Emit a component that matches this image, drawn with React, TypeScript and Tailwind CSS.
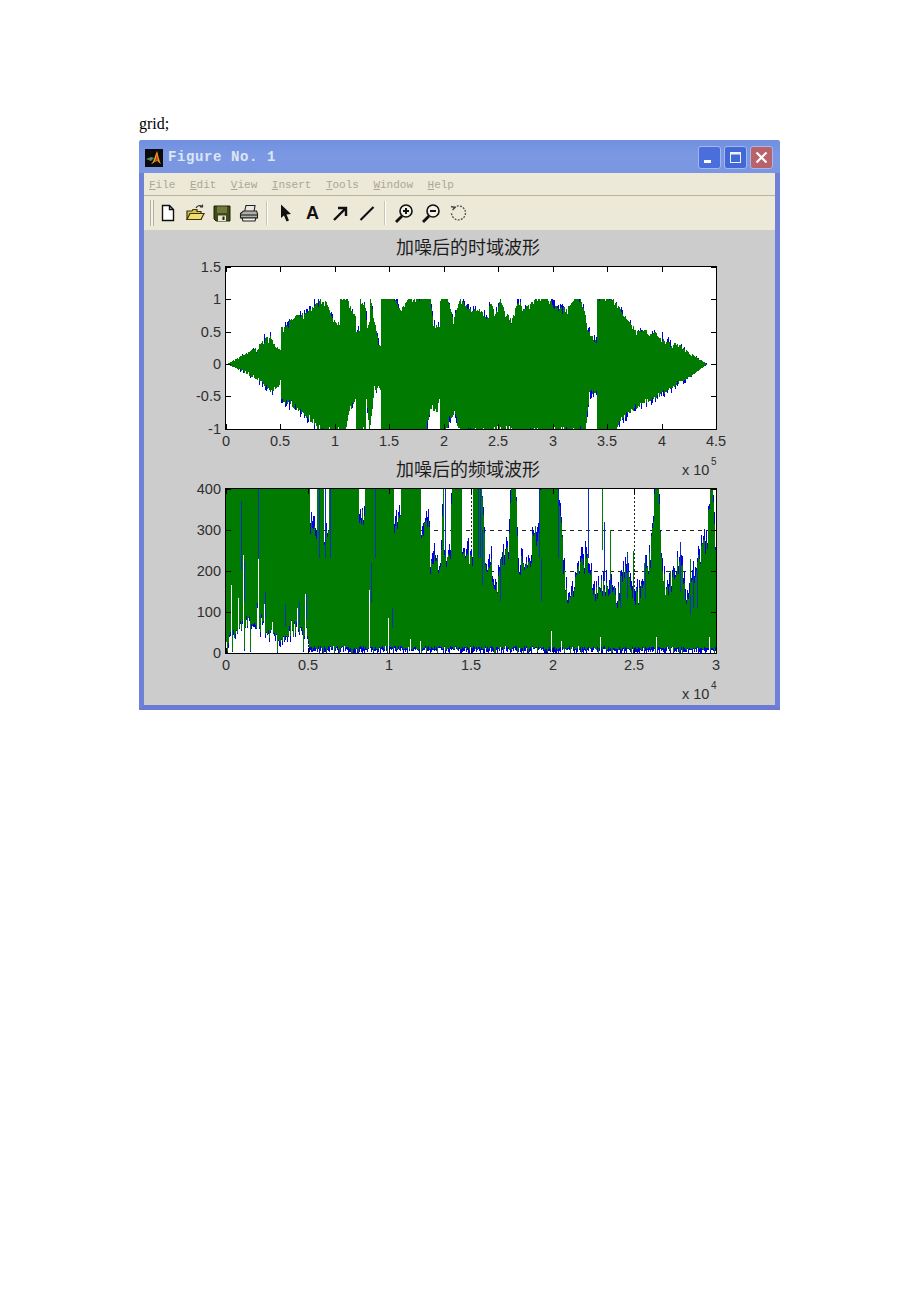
const menuItems = ["File", "Edit", "View", "Insert", "Tools", "Window", "Help"];

type Key = [number, number];

// seeded so the picture is the same on every load
function makeRand(seed: number) {
  let s = seed;
  return () => {
    s = (s * 1664525 + 1013904223) % 4294967296;
    return s / 4294967296;
  };
}

function interp(keys: Key[], x: number) {
  if (x <= keys[0][0]) return keys[0][1];
  for (let i = 1; i < keys.length; i++) {
    if (x <= keys[i][0]) {
      const [x0, y0] = keys[i - 1];
      const [x1, y1] = keys[i];
      return y0 + ((y1 - y0) * (x - x0)) / (x1 - x0 || 1);
    }
  }
  return keys[keys.length - 1][1];
}

const timeUpper: Key[] = [
  [226, 0], [240, 0.12], [257, 0.27], [265, 0.42], [270, 0.44], [275, 0.3], [280, 0.27], [281, 0.58], [288, 0.65],
  [295, 0.75], [307, 0.82], [315, 0.95], [322, 1.02], [327, 0.95], [330, 0.8], [336, 0.65], [339, 0.7], [340, 1.05],
  [347, 1.05], [350, 0.9], [355, 0.75], [356, 0.5], [359, 0.55], [360, 1.05], [365, 0.9], [367, 0.6], [369, 0.65],
  [370, 1.05], [373, 0.8], [378, 0.35], [380, 0.3], [381, 1.1], [393, 1.1], [400, 0.85], [410, 1.05], [430, 1.05],
  [433, 0.62], [439, 0.62], [440, 1.05], [447, 1.05], [453, 0.7], [460, 1.02], [470, 0.85], [480, 0.85], [487, 0.72],
  [490, 0.98], [495, 0.78], [500, 1.02], [505, 0.8], [512, 0.72], [518, 1.03], [523, 0.85], [527, 0.92], [537, 1.03],
  [547, 1.03], [557, 0.88], [567, 0.88], [575, 1.03], [580, 1.03], [585, 0.78], [587, 0.55], [596, 0.36], [597, 1.05],
  [611, 1.05], [618, 0.9], [627, 0.7], [637, 0.52], [647, 0.52], [657, 0.5], [667, 0.35], [677, 0.33], [687, 0.2],
  [697, 0.1], [707, 0],
];

const timeLower: Key[] = [
  [226, 0], [240, -0.1], [262, -0.3], [270, -0.45], [278, -0.35], [280, -0.3], [281, -0.58], [300, -0.75], [320, -1.05],
  [345, -1.05], [348, -0.8], [355, -0.55], [356, -1.05], [365, -1.05], [366, -0.55], [369, -1.05], [372, -0.75],
  [374, -0.42], [380, -0.42], [381, -1.1], [425, -1.1], [430, -0.72], [437, -0.75], [439, -0.55], [440, -1.05],
  [447, -1.05], [449, -0.85], [455, -0.8], [458, -1.05], [585, -1.05], [587, -0.8], [589, -0.48], [596, -0.45],
  [597, -1.1], [612, -1.1], [622, -0.85], [640, -0.65], [660, -0.5], [675, -0.35], [690, -0.2], [707, 0],
];

const freqUpper: Key[] = [
  [226, 460], [309, 460], [310, 300], [316, 300], [317, 460], [323, 460], [324, 290], [328, 290], [329, 460], [358, 460],
  [359, 330], [364, 330], [365, 460], [393, 460], [394, 320], [400, 320], [401, 460], [420, 460], [421, 300], [429, 300],
  [430, 220], [440, 215], [441, 240], [443, 460], [444, 230], [450, 230], [452, 460], [461, 460], [462, 240], [472, 240],
  [473, 460], [480, 460], [485, 220], [490, 220], [495, 150], [500, 200], [508, 250], [511, 420], [515, 420], [518, 200],
  [523, 220], [530, 200], [533, 300], [538, 280], [541, 460], [556, 460], [562, 310], [563, 200], [567, 130], [577, 180],
  [580, 220], [587, 220], [595, 130], [602, 160], [608, 150], [617, 130], [627, 220], [633, 130], [640, 140], [650, 230],
  [655, 420], [658, 420], [662, 200], [667, 140], [680, 230], [687, 120], [697, 210], [707, 280], [710, 420], [712, 420],
  [716, 210],
];

const freqLower: Key[] = [
  [226, 28], [232, 55], [240, 70], [250, 80], [257, 95], [265, 55], [280, 40], [290, 65], [305, 55], [308, 40], [309, 14],
  [716, 12],
];

const whiteSpikes: Key[] = [[231, 165], [238, 135], [243, 240], [258, 230], [264, 120], [272, 75], [297, 110], [305, 145], [369, 155], [388, 85], [600, 40], [656, 40], [410, 35], [420, 30], [551, 55], [561, 30], [709, 40]];
const blueSpikes: Key[] = [[241, 370], [244, 225], [258, 420], [265, 150], [285, 120], [299, 125], [306, 145], [371, 220], [375, 420], [392, 110], [478, 420], [539, 420], [558, 420], [588, 420], [541, 230], [604, 320], [610, 260], [620, 200], [627, 240], [645, 240], [680, 270], [693, 200], [697, 200], [319, 420], [325, 420], [330, 420], [480, 420], [482, 300], [445, 420], [500, 230], [690, 170]];
const greenSpikes: Key[] = [[602, 420], [610, 300], [625, 210], [633, 250], [644, 220], [660, 200], [670, 200], [690, 230], [700, 210], [535, 310]];

function timePaths() {
  const rand = makeRand(17);
  const y = (v: number) => 364 - 64.8 * Math.max(-1, Math.min(1, v));
  let blue = "";
  let green = "";
  for (let x = 226; x <= 707; x++) {
    const fade = Math.min(1, (707 - x) / 40, (x - 226) / 40);
    const up = interp(timeUpper, x) - rand() * rand() * 0.12 * fade;
    const low = interp(timeLower, x) + rand() * rand() * 0.12 * fade;
    // the blue trace only shows past the green one here and there
    const upB = interp(timeUpper, x) + (rand() < 0.25 ? rand() * 0.07 * fade : -0.1 * fade);
    const lowB = interp(timeLower, x) - (rand() < 0.25 ? rand() * 0.07 * fade : -0.1 * fade);
    blue += `M${x + 0.5} ${y(upB).toFixed(1)}V${y(lowB).toFixed(1)}`;
    green += `M${x + 0.5} ${y(up).toFixed(1)}V${y(low).toFixed(1)}`;
  }
  return { blue, green };
}

function freqPaths() {
  const rand = makeRand(91);
  const y = (v: number) => 653 - 0.41 * Math.max(0, Math.min(400, v));
  let blue = "";
  let green = "";
  let white = "";
  for (let x = 226; x <= 716; x++) {
    const up = interp(freqUpper, x) + (rand() - 0.5) * 55;
    const low = Math.max(0, interp(freqLower, x) * (0.6 + rand() * 0.7)) * (rand() < 0.08 ? 0.1 : 1);
    const upB = up + rand() * 35;
    const lowB = Math.max(0, low - rand() * 14);
    blue += `M${x + 0.5} ${y(upB).toFixed(1)}V${y(lowB).toFixed(1)}`;
    green += `M${x + 0.5} ${y(up).toFixed(1)}V${y(low).toFixed(1)}`;
  }
  whiteSpikes.forEach(([x, v]) => {
    white += `M${x + 0.5} 653V${y(v).toFixed(1)}`;
  });
  let blueTop = "";
  blueSpikes.forEach(([x, v]) => {
    blueTop += `M${x + 0.5} ${y(v).toFixed(1)}V${y(v * 0.55).toFixed(1)}`;
  });
  let greenTop = "";
  greenSpikes.forEach(([x, v]) => {
    greenTop += `M${x + 0.5} ${y(v).toFixed(1)}V${y(v * 0.6).toFixed(1)}`;
  });
  return { blue, green, white, blueTop, greenTop };
}

const labelFont = "[font-family:'Liberation_Sans',Arial,sans-serif] text-[14.5px] fill-[#2f2f2f]";
const supFont = "[font-family:'Liberation_Sans',Arial,sans-serif] text-[10px] fill-[#2f2f2f]";
const titleFont = "[font-family:'Noto_Sans_CJK_SC',sans-serif] text-[18px] fill-[#1c1c1c]";

function Ticks({ xs, ys, left, right, top, bottom }: { xs: number[]; ys: number[]; left: number; right: number; top: number; bottom: number }) {
  let d = "";
  xs.forEach((x) => {
    d += `M${x + 0.5} ${top}v5M${x + 0.5} ${bottom}v-5`;
  });
  ys.forEach((y) => {
    d += `M${left} ${y + 0.5}h5M${right} ${y + 0.5}h-5`;
  });
  return <path d={d} stroke="#000" fill="none" />;
}

function Figure() {
  const t = timePaths();
  const f = freqPaths();
  const topX = [226, 280, 335, 389, 444, 498, 553, 607, 662, 716];
  const topXLabels = ["0", "0.5", "1", "1.5", "2", "2.5", "3", "3.5", "4", "4.5"];
  const topY = [267, 299, 332, 364, 396, 429];
  const topYLabels = ["1.5", "1", "0.5", "0", "-0.5", "-1"];
  const botX = [226, 308, 389, 471, 553, 634, 716];
  const botXLabels = ["0", "0.5", "1", "1.5", "2", "2.5", "3"];
  const botY = [489, 530, 571, 612, 653];
  const botYLabels = ["400", "300", "200", "100", "0"];

  return (
    <svg viewBox="144 230 632 475" width="632" height="475" className="block">
      <text x="468" y="254" textAnchor="middle" className={titleFont}>加噪后的时域波形</text>
      <rect x="226" y="267" width="490" height="162" fill="#fff" />
      <g shapeRendering="crispEdges">
        <path d={t.blue} stroke="#0000e0" fill="none" />
        <path d={t.green} stroke="#007a00" fill="none" />
        <rect x="225.5" y="266.5" width="491" height="163" fill="none" stroke="#000" />
        <Ticks xs={topX} ys={topY} left={226} right={716} top={267} bottom={429} />
      </g>
      {topX.map((x, i) => (
        <text key={x} x={x} y="446" textAnchor="middle" className={labelFont}>{topXLabels[i]}</text>
      ))}
      {topY.map((y, i) => (
        <text key={y} x="221" y={y + 5} textAnchor="end" className={labelFont}>{topYLabels[i]}</text>
      ))}
      <text x="682" y="475" className={labelFont}>x 10</text>
      <text x="711" y="465" className={supFont}>5</text>

      <text x="468" y="476" textAnchor="middle" className={titleFont}>加噪后的频域波形</text>
      <rect x="226" y="489" width="490" height="164" fill="#fff" />
      <g shapeRendering="crispEdges">
        <path d="M226 530.5H716M226 571.5H716M226 612.5H716" stroke="#222" strokeDasharray="4 4" fill="none" />
        <path d="M308.5 489V653M389.5 489V653M471.5 489V653M553.5 489V653M634.5 489V653" stroke="#222" strokeDasharray="2 2" fill="none" />
        <path d={f.blue} stroke="#0000e0" fill="none" />
        <path d={f.green} stroke="#007a00" fill="none" />
        <path d={f.blueTop} stroke="#0a2fc8" fill="none" />
        <path d={f.greenTop} stroke="#007a00" fill="none" />
        <path d={f.white} stroke="#fff" fill="none" />
        <rect x="225.5" y="488.5" width="491" height="165" fill="none" stroke="#000" />
        <Ticks xs={botX} ys={botY} left={226} right={716} top={489} bottom={653} />
      </g>
      {botX.map((x, i) => (
        <text key={x} x={x} y="670" textAnchor="middle" className={labelFont}>{botXLabels[i]}</text>
      ))}
      {botY.map((y, i) => (
        <text key={y} x="221" y={y + 5} textAnchor="end" className={labelFont}>{botYLabels[i]}</text>
      ))}
      <text x="682" y="699" className={labelFont}>x 10</text>
      <text x="711" y="689" className={supFont}>4</text>
    </svg>
  );
}

function MatlabIcon() {
  return (
    <svg width="18" height="18" viewBox="0 0 18 18" className="shrink-0">
      <rect width="18" height="18" fill="#0b0b0b" />
      <path d="M1 10l5-2 3 1-3 3z" fill="#4f8a6a" />
      <path d="M6 15c3-2 4-9 6-13 1 3 2 9 4 13-2-1-3-3-4-3-2 0-4 3-6 3z" fill="#e8a020" />
      <path d="M9 13c2-2 2-5 3-8 0 3 1 5 1 7-1-1-2 0-4 1z" fill="#c83a10" />
    </svg>
  );
}

function CaptionButton({ kind }: { kind: "min" | "max" | "close" }) {
  const bg = kind === "close" ? "bg-[#b9626a]" : kind === "min" ? "bg-[#4a6fdc]" : "bg-[#4168d6]";
  return (
    <div className={`w-[23px] h-[23px] rounded-[3px] border border-[#a4b8ee] flex items-center justify-center ${bg}`}>
      <svg width="17" height="17" viewBox="0 0 17 17">
        {kind === "min" && <rect x="3" y="11" width="7" height="3" fill="#fff" />}
        {kind === "max" && (
          <g fill="none" stroke="#eef2ff">
            <rect x="3.5" y="3.5" width="10" height="10" />
            <path d="M3 4.5h11" strokeWidth="2" />
          </g>
        )}
        {kind === "close" && <path d="M3.5 3.5l10 10M13.5 3.5l-10 10" stroke="#fff" strokeWidth="2.2" />}
      </svg>
    </div>
  );
}

function ToolIcon({ name }: { name: string }) {
  return (
    <div className="w-[27px] h-[22px] flex items-center justify-center">
      <svg width="20" height="20" viewBox="0 0 20 20">
        {name === "new" && <path d="M4.5 2.5h7l4 4v11h-11zM11.5 2.5v4h4" fill="#fff" stroke="#111" strokeWidth="1.4" />}
        {name === "open" && (
          <g>
            <path d="M2 8h5l1-1.5h4v2h4v8H2z" fill="#d8c24a" stroke="#3c3410" strokeWidth="1.2" />
            <path d="M2 16.5l3-6h14l-3 6z" fill="#f0e070" stroke="#3c3410" strokeWidth="1.2" />
            <path d="M11 5c1-2.5 4-3 6-1.5M17.5 1.5V4H15" fill="none" stroke="#333" strokeWidth="1.2" />
          </g>
        )}
        {name === "save" && (
          <g>
            <path d="M2 3h16v15H4l-2-2z" fill="#3f4a18" stroke="#1e2208" />
            <rect x="5" y="3.5" width="10" height="6.5" fill="#6f7a3a" />
            <rect x="6" y="12.5" width="8" height="5.5" fill="#e8e6d4" />
            <rect x="10.5" y="13.5" width="2" height="3.5" fill="#222" />
          </g>
        )}
        {name === "print" && (
          <g stroke="#222" strokeWidth="1.1">
            <path d="M5.5 9L7 2.5h9l-1 6.5z" fill="#e8e8e4" />
            <path d="M1.5 10.5l3-2.5h13l1 2.5V15h-17z" fill="#b0b0a8" />
            <path d="M3 15h14l-1 3H4z" fill="#f2f2ec" />
            <path d="M2 12h16" fill="none" />
          </g>
        )}
        {name === "pointer" && <path d="M5 1.5l10 9.5-4.5.5 2.5 6-2.5 1-2.5-6L5 15z" fill="#111" />}
        {name === "arrow" && <path d="M4 17L15 6M8 5h8v8" fill="none" stroke="#111" strokeWidth="2.4" />}
        {name === "line" && <path d="M3.5 17L16.5 4" fill="none" stroke="#111" strokeWidth="2.2" />}
        {name === "zoomin" && (
          <g fill="none" stroke="#111">
            <circle cx="12" cy="8" r="6" strokeWidth="1.6" fill="#f4f2e6" />
            <path d="M8 13l-6 6" strokeWidth="2.8" />
            <path d="M9 8h6M12 5v6" strokeWidth="2" />
          </g>
        )}
        {name === "zoomout" && (
          <g fill="none" stroke="#111">
            <circle cx="12" cy="8" r="6" strokeWidth="1.6" fill="#f4f2e6" />
            <path d="M8 13l-6 6" strokeWidth="2.8" />
            <path d="M9 8h6" strokeWidth="2" />
          </g>
        )}
        {name === "rotate" && (
          <g fill="none" stroke="#444" strokeWidth="1.3">
            <path d="M6 4.5a7 7 0 1 1-2.5 5" strokeDasharray="1.8 1.4" />
            <path d="M3 3.5l4 1-2.5 2.5" />
          </g>
        )}
      </svg>
    </div>
  );
}

function Separator() {
  return <div className="w-[2px] h-[24px] mx-[4px] bg-[#c9c5b2] border-r border-white" />;
}

export default function App() {
  return (
    <div className="min-h-[1302px] bg-white pt-[116px] pl-[139px]">
      <p className="h-[24px] text-[16px] leading-[16px] text-black [font-family:'Liberation_Serif','Times_New_Roman',serif]">
        grid;
      </p>

      <div className="w-[641px] border-x-[5px] border-b-[5px] border-x-[#6f80d8] border-b-[#6b7bd4] bg-[#cccccc] rounded-t-[3px]">
        {/* Title bar */}
        <div className="-mx-[5px] h-[33px] pl-[6px] pr-[7px] pt-[2px] flex items-center rounded-t-[3px] bg-gradient-to-b from-[#6f90e0] via-[#7c98e2] to-[#7b96e0]">
          <MatlabIcon />
          <span className="ml-[5px] text-[14px] font-bold tracking-[0.6px] text-[#dbe6f6] [font-family:'Liberation_Mono','Courier_New',monospace]">
            Figure No. 1
          </span>
          <div className="ml-auto flex items-center gap-[3px]">
            <CaptionButton kind="min" />
            <CaptionButton kind="max" />
            <CaptionButton kind="close" />
          </div>
        </div>

        {/* Menu bar */}
        <div className="h-[23px] pl-[5px] pt-[2px] flex items-center gap-[14.5px] bg-[#ece9d8] border-b border-[#b8b49e] text-[11px] text-[#a9a79a] [font-family:'Liberation_Mono','Courier_New',monospace]">
          {menuItems.map((item) => (
            <span key={item}>
              <span className="underline">{item[0]}</span>
              {item.slice(1)}
            </span>
          ))}
        </div>

        {/* Toolbar */}
        <div className="h-[34px] pl-[6px] flex items-center bg-[#ece9d8]">
          <div className="w-[4px] h-[26px] border-x border-[#b5b1a0] bg-[#f6f4ea]" />
          <ToolIcon name="new" />
          <ToolIcon name="open" />
          <ToolIcon name="save" />
          <ToolIcon name="print" />
          <Separator />
          <ToolIcon name="pointer" />
          <div className="w-[27px] text-center text-[18px] leading-none font-bold text-[#111] [font-family:'Liberation_Sans',Arial,sans-serif]">
            A
          </div>
          <ToolIcon name="arrow" />
          <ToolIcon name="line" />
          <Separator />
          <ToolIcon name="zoomin" />
          <ToolIcon name="zoomout" />
          <ToolIcon name="rotate" />
        </div>

        <Figure />
      </div>
    </div>
  );
}
